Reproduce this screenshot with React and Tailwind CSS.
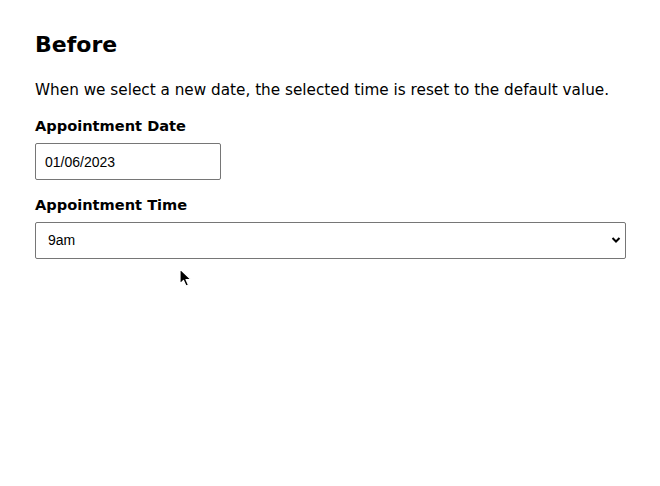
import React, { useState } from 'react';

function Cursor() {
  return (
    <svg className="absolute left-[179px] top-[268px]" width="14" height="20" viewBox="0 0 14 20">
      <path d="M1 1 L1 16 L4.5 12.5 L7 18 L9.5 17 L7 11.5 L12 11.5 Z" fill="#000" stroke="#fff" strokeWidth="1.2" strokeLinejoin="round" />
    </svg>
  );
}

export default function App() {
  const [date, setDate] = useState("01/06/2023");
  const [time, setTime] = useState("9am");

  return (
    <div className="relative w-[660px] h-[486px] bg-white font-['DejaVu_Sans',sans-serif] text-black">
      <div className="px-[35px] pt-[31px]">
        <h1 className="text-[22px] font-bold leading-[28px]">Before</h1>

        <p className="mt-[21px] text-[15.25px] leading-[20px]">
          When we select a new date, the selected time is reset to the default value.
        </p>

        <label className="block mt-[16px] text-[14.6px] font-bold leading-[20px]">Appointment Date</label>
        <input
          value={date}
          onChange={(e) => setDate(e.target.value)}
          className="mt-[7px] block w-[186px] h-[37px] border border-[#767676] rounded-[2px] px-[9px] text-[14px] font-['Liberation_Sans',sans-serif] outline-none"
        />

        <label className="block mt-[15px] text-[14.6px] font-bold leading-[20px]">Appointment Time</label>
        <div className="relative mt-[7px] w-[591px]">
          <select
            value={time}
            onChange={(e) => setTime(e.target.value)}
            className="block w-full h-[37px] appearance-none border border-[#767676] rounded-[2px] pl-[12px] text-[14px] font-['Liberation_Sans',sans-serif] bg-white outline-none"
          >
            <option>9am</option>
            <option>10am</option>
            <option>11am</option>
            <option>12pm</option>
          </select>
          <svg className="absolute right-[5px] top-[14px] pointer-events-none" width="10" height="8" viewBox="0 0 10 8">
            <path d="M1.5 2 L5 5.5 L8.5 2" fill="none" stroke="#000" strokeWidth="2" />
          </svg>
        </div>
      </div>
      <Cursor />
    </div>
  );
}
